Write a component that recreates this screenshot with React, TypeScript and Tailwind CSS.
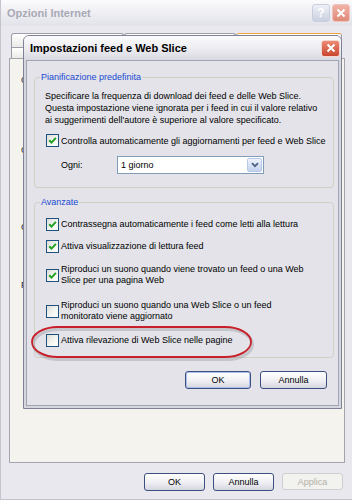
import React from "react";

function Check({ on }: { on?: boolean }) {
  return (
    <span className="flex h-[13px] w-[13px] shrink-0 items-center justify-center border border-[#1c5180] bg-gradient-to-br from-[#dcdcd7] via-[#f3f3ef] to-white">
      {on && (
        <svg width="9" height="9" viewBox="0 0 9 9">
          <path d="M1.2 4.2 L3.5 6.6 L7.9 1.9" fill="none" stroke="#21a121" strokeWidth="2" />
        </svg>
      )}
    </span>
  );
}

function Btn({ label, cls }: { label: string; cls: string }) {
  return (
    <div
      className={
        "flex h-[18px] items-center justify-center rounded-[3px] border border-[#3d4f80] bg-gradient-to-b from-white via-[#f1f1f5] to-[#d5d5df] text-black " +
        cls
      }
    >
      {label}
    </div>
  );
}

export default function App() {
  return (
    <div className="relative h-[500px] w-[352px] overflow-hidden border-l border-b border-[#c4c4ce] bg-[#e8e8ee] font-[family-name:'Liberation_Sans',Arial,sans-serif] text-[9px] leading-[12px] text-black">
      {/* Outer window title bar */}
      <div className="flex h-[26px] items-center bg-gradient-to-b from-[#fbfbfd] via-[#eeeef3] to-[#e2e2ea] pl-[6px] pr-[2px]">
        <span className="flex-1 text-[11px] font-bold text-[#a9a9b5]">Opzioni Internet</span>
        <div className="mr-[2px] flex h-[18px] w-[18px] items-center justify-center rounded-[3px] border border-[#c9cfdd] bg-gradient-to-b from-[#eef1f7] to-[#c9d0df] text-[12px] font-bold text-white">
          ?
        </div>
        <div className="flex h-[18px] w-[18px] items-center justify-center rounded-[3px] border border-[#efc6be] bg-gradient-to-b from-[#f0b3a6] to-[#e08a79]">
          <svg width="10" height="10" viewBox="0 0 10 10">
            <path d="M1.5 1.5 L8.5 8.5 M8.5 1.5 L1.5 8.5" stroke="white" strokeWidth="2" />
          </svg>
        </div>
      </div>

      {/* Tabs */}
      <div className="ml-[10px] mt-[7px] flex flex-col">
        <div className="flex h-[14px]">
          <div className="w-[113px] rounded-t-[3px] border border-b-0 border-[#9d9daa] bg-gradient-to-b from-white to-[#ebeae6]" />
          <div className="w-[112px] rounded-t-[3px] border border-b-0 border-[#9d9daa] bg-gradient-to-b from-white to-[#ebeae6]" />
          <div className="w-[106px] rounded-t-[3px] border border-b-0 border-t-[#f1a43a] border-x-[#9d9daa] bg-gradient-to-b from-white to-[#ebeae6]" />
        </div>
        <div className="flex h-[11px]">
          <div className="w-[113px] border border-b-0 border-[#9d9daa] bg-gradient-to-b from-white to-[#ebeae6]" />
          <div className="w-[112px] border border-b-0 border-[#9d9daa] bg-gradient-to-b from-white to-[#ebeae6]" />
        </div>
      </div>

      {/* Tab page (mostly hidden behind the dialog) */}
      <div className="ml-[8px] flex h-[405px] w-[336px] flex-col border border-[#a4a4ae] bg-[#f4f3ee] pl-[11px] text-[#222]">
        <span className="mt-[15px] w-[6px]">C</span>
        <span className="mt-[58px] w-[6px]">C</span>
        <span className="mt-[65px] w-[6px]">C</span>
        <span className="mt-[46px] w-[6px]">F</span>
      </div>

      {/* Outer buttons */}
      <div className="mt-[10px] flex justify-end gap-[8px] pr-[9px]">
        <Btn label="OK" cls="w-[61px] h-[17px]" />
        <Btn label="Annulla" cls="w-[61px] h-[17px]" />
        <div className="flex h-[17px] w-[61px] items-center justify-center rounded-[3px] border border-[#cfcfd2] bg-[#f2f2ef] text-[#b2b0a6]">
          Applica
        </div>
      </div>

      {/* Dialog */}
      <div className="absolute left-[22px] top-[35px] flex h-[374px] w-[319px] flex-col overflow-hidden rounded-t-[6px] border border-[#7f8196] bg-[#d6d6df]">
        <div className="flex h-[24px] shrink-0 items-center bg-gradient-to-b from-[#fcfcfd] via-[#ededf2] to-[#d9d9e2] pl-[6px] pr-[1px]">
          <span className="flex-1 text-[11px] font-bold text-black">Impostazioni feed e Web Slice</span>
          <div className="flex h-[17px] w-[19px] items-center justify-center rounded-[3px] border border-[#f4d6cf] bg-gradient-to-b from-[#eb8a74] to-[#c9432d]">
            <svg width="10" height="10" viewBox="0 0 10 10">
              <path d="M1.5 1.5 L8.5 8.5 M8.5 1.5 L1.5 8.5" stroke="white" strokeWidth="2" />
            </svg>
          </div>
        </div>
        <div className="flex flex-1 flex-col px-[2px] pb-[2px]">
          <div className="flex flex-1 flex-col border border-[#a2a4b6] bg-[#e3e3e9] pl-[7px] pt-[10px]">
            {/* Group 1 */}
            <fieldset className="flex w-[300px] flex-col rounded-[4px] border border-[#cfcfc4] pb-[13px]">
              <legend className="ml-[5px] px-[1px] leading-[12px] text-[#1a4ad0]">Pianificazione predefinita</legend>
              <p className="ml-[10px] mt-[7px] leading-[12px]">
                Specificare la frequenza di download dei feed e delle Web Slice.
                <br />
                Questa impostazione viene ignorata per i feed in cui il valore relativo
                <br />
                ai suggerimenti dell'autore è superiore al valore specificato.
              </p>
              <label className="ml-[11px] mt-[8px] flex items-center gap-[2px]">
                <Check on />
                <span>Controlla automaticamente gli aggiornamenti per feed e Web Slice</span>
              </label>
              <div className="mt-[9px] flex items-center">
                <span className="ml-[26px] w-[56px]">Ogni:</span>
                <div className="flex h-[18px] w-[147px] items-center border border-[#7f9db9] bg-white">
                  <span className="flex-1 pl-[3px]">1 giorno</span>
                  <span className="mr-[1px] flex h-[14px] w-[15px] items-center justify-center rounded-[2px] border border-[#b9c8e6] bg-gradient-to-b from-[#eef3fd] to-[#c3d2f0]">
                    <svg width="8" height="6" viewBox="0 0 8 6">
                      <path d="M1 1.2 L4 4.2 L7 1.2" fill="none" stroke="#4d6185" strokeWidth="1.8" />
                    </svg>
                  </span>
                </div>
              </div>
            </fieldset>

            {/* Group 2 */}
            <fieldset className="mt-[8px] flex w-[300px] flex-col rounded-[4px] border border-[#cfcfc4] pb-[10px] leading-[11px]">
              <legend className="ml-[5px] px-[1px] leading-[12px] text-[#1a4ad0]">Avanzate</legend>
              <label className="ml-[11px] mt-[10px] flex items-center gap-[2px]">
                <Check on />
                <span>Contrassegna automaticamente i feed come letti alla lettura</span>
              </label>
              <label className="ml-[11px] mt-[9px] flex items-center gap-[2px]">
                <Check on />
                <span>Attiva visualizzazione di lettura feed</span>
              </label>
              <label className="ml-[11px] mt-[11px] flex items-center gap-[2px]">
                <Check on />
                <span>
                  Riproduci un suono quando viene trovato un feed o una Web
                  <br />
                  Slice per una pagina Web
                </span>
              </label>
              <label className="ml-[11px] mt-[14px] flex items-center gap-[2px]">
                <Check />
                <span>
                  Riproduci un suono quando una Web Slice o un feed
                  <br />
                  monitorato viene aggiornato
                </span>
              </label>
              <label className="ml-[11px] mt-[12px] flex items-center gap-[2px]">
                <Check />
                <span>Attiva rilevazione di Web Slice nelle pagine</span>
              </label>
            </fieldset>

            <div className="mt-[13px] flex justify-end gap-[9px] pr-[11px]">
              <Btn label="OK" cls="w-[66px] shadow-[inset_0_0_0_1px_#a9c1ec]" />
              <Btn label="Annulla" cls="w-[67px]" />
            </div>
          </div>
        </div>
      </div>

      {/* Red highlight */}
      <svg className="absolute left-[28px] top-[324px]" width="228" height="40" viewBox="0 0 228 40">
        <rect x="4.5" y="5.5" width="219" height="30" rx="26" ry="15" fill="none" stroke="#8a8a96" strokeOpacity="0.35" strokeWidth="3" />
        <rect x="3" y="3" width="219" height="30" rx="26" ry="15" fill="none" stroke="#c8202a" strokeWidth="1.8" />
      </svg>
    </div>
  );
}
